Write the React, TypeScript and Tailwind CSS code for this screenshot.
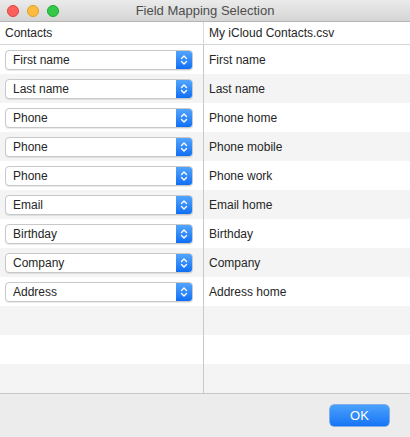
const ROWS: [string, string][] = [
  ['First name', 'First name'],
  ['Last name', 'Last name'],
  ['Phone', 'Phone home'],
  ['Phone', 'Phone mobile'],
  ['Phone', 'Phone work'],
  ['Email', 'Email home'],
  ['Birthday', 'Birthday'],
  ['Company', 'Company'],
  ['Address', 'Address home'],
  ['', ''],
  ['', ''],
  ['', ''],
];

function Popup({ value }: { value: string }) {
  return (
    <div className="flex h-[20px] w-[188px] items-stretch overflow-hidden rounded-[4px] border border-[#c8c8c8] bg-white shadow-[0_1px_0_rgba(0,0,0,0.08)]">
      <span className="flex flex-1 items-center pl-[7px] text-[12px] text-[#262626]">{value}</span>
      <span className="flex w-[16px] items-center justify-center bg-gradient-to-b from-[#52a5fc] to-[#0d6ef4]">
        <svg width="8" height="12" viewBox="0 0 8 12" fill="none" stroke="white" strokeWidth="1.4" strokeLinecap="round" strokeLinejoin="round">
          <path d="M1.5 4.5 L4 2 L6.5 4.5" />
          <path d="M1.5 7.5 L4 10 L6.5 7.5" />
        </svg>
      </span>
    </div>
  );
}

export default function App() {
  return (
    <div className="flex h-[437px] w-[410px] flex-col overflow-hidden bg-[#ececec] font-['Liberation_Sans',Arial,sans-serif]">
      <div className="relative flex h-[22px] shrink-0 items-center justify-center border-b border-[#b4b4b4] bg-gradient-to-b from-[#ebebeb] to-[#d5d5d5]">
        <div className="absolute left-[7px] top-[5px] flex gap-[8px]">
          <span className="h-[12px] w-[12px] rounded-full border border-[#e0443e] bg-[#fc605c]" />
          <span className="h-[12px] w-[12px] rounded-full border border-[#dea123] bg-[#fdbc40]" />
          <span className="h-[12px] w-[12px] rounded-full border border-[#1aab29] bg-[#34c84a]" />
        </div>
        <span className="text-[13px] text-[#4d4d4d]">Field Mapping Selection</span>
      </div>
      <div className="flex h-[23px] shrink-0 border-b border-[#d5d5d5] bg-white text-[12px] text-[#262626]">
        <div className="flex w-[204px] items-center border-r border-[#d9d9d9] pl-[5px]">Contacts</div>
        <div className="flex flex-1 items-center pl-[5px]">My iCloud Contacts.csv</div>
      </div>
      <div className="flex flex-col border-b border-[#c8c8c8]">
        {ROWS.map(([left, right], i) => (
          <div key={i} className={`flex h-[29px] ${i % 2 === 0 ? 'bg-white' : 'bg-[#f4f4f4]'}`}>
            <div className="flex w-[204px] items-center border-r border-[#c8c8c8] pl-[5px]">
              {left && <Popup value={left} />}
            </div>
            <div className="flex flex-1 items-center pl-[5px] text-[12px] text-[#262626]">{right}</div>
          </div>
        ))}
      </div>
      <div className="flex flex-1 items-center justify-end pr-[21px]">
        <button
          type="button"
          className="h-[21px] w-[59px] rounded-[4px] bg-gradient-to-b from-[#4aa1fc] to-[#1474f5] text-[13px] text-white shadow-[0_0_0_0.5px_#1a6fe0]"
        >
          OK
        </button>
      </div>
    </div>
  );
}
